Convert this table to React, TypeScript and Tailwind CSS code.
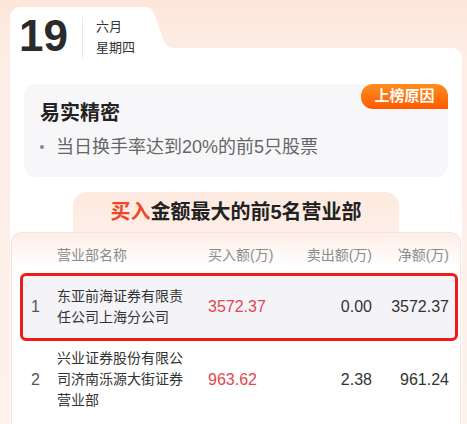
const rows = [
  { no: 1, name: "东亚前海证券有限责任公司上海分公司", buy: "3572.37", sell: "0.00", net: "3572.37", mark: true },
  { no: 2, name: "兴业证券股份有限公司济南泺源大街证券营业部", buy: "963.62", sell: "2.38", net: "961.24", mark: false },
];

const grid = "grid grid-cols-[26px_151px_92px_72px_77px] pl-[8px] pr-[6px]";

function DateTab() {
  return (
    <div className="flex h-[41px]">
      <div className="w-[132px] bg-white rounded-tl-[10px] flex items-start pl-[9px]">
        <div className="mt-[7px] text-[44px] leading-[44px] font-bold text-[#2b2b2b]">19</div>
        <div className="mt-[10px] ml-[14px] w-px h-[41px] bg-[#f5e4dc]" />
        <div className="mt-[9px] ml-[13px] text-[13px] leading-[21px] text-[#333]">
          <div>六月</div>
          <div>星期四</div>
        </div>
      </div>
      <svg width="34" height="41" viewBox="0 0 34 41" className="block">
        <path d="M0 0 H2 C9 0 11 3 14 11 L21 32 C23 38 26 41 34 41 H0 Z" fill="#ffffff" />
      </svg>
    </div>
  );
}

function ReasonCard() {
  return (
    <div className="relative bg-[#f7f7f9] rounded-[12px] pl-[16px] pt-[15px] pb-[16px]">
      <div className="absolute top-0 right-0 w-[87px] h-[25px] rounded-tl-[12px] rounded-bl-[12px] rounded-tr-[12px] bg-gradient-to-b from-[#ff8d1c] to-[#ff5800] flex items-center justify-center text-white text-[15px] font-bold">
        上榜原因
      </div>
      <div className="text-[20px] leading-[28px] font-bold text-[#222]">易实精密</div>
      <div className="mt-[6px] flex items-center text-[18px] leading-[28px] text-[#666]">
        <span className="w-[4px] h-[4px] rounded-full bg-[#8a8a8a] ml-[0px] mr-[12px]" />
        当日换手率达到20%的前5只股票
      </div>
    </div>
  );
}

function TopTable() {
  return (
    <div className="mt-[15px] -mx-[13px]">
      <div className="mx-auto w-[326px] h-[42px] rounded-t-[14px] bg-gradient-to-b from-[#fde9df] to-[#fdefe8] text-center text-[20px] leading-[40px] font-bold text-[#222]">
        <span className="text-[#f0472a]">买入</span>金额最大的前5名营业部
      </div>
      <div className="-mt-[2px] relative border border-[#f8e3da] rounded-t-[10px] bg-[linear-gradient(180deg,#fdeee7_0px,#ffffff_34px)] pl-[8px] pr-[2px] pb-[20px]">
        <div className={`${grid} border-x-[3px] border-transparent h-[40px] pt-[4px] items-center text-[14px] text-[#8c8c8c]`}>
          <div />
          <div>营业部名称</div>
          <div>买入额(万)</div>
          <div className="text-right">卖出额(万)</div>
          <div className="text-right">净额(万)</div>
        </div>
        {rows.map((r) => (
          <div
            key={r.no}
            className={`${grid} items-center border-[3px] ${
              r.mark
                ? "border-[#ef1b1b] rounded-[6px] bg-[#f4f4f8] pt-[10px] pb-[10px]"
                : "border-transparent pt-[4px] pb-[10px]"
            }`}
          >
            <div className="text-[16px] text-[#555]">{r.no}</div>
            <div className="w-[130px] text-[14px] leading-[21px] text-[#333]">{r.name}</div>
            <div className="text-[16px] text-[#e3474d]">{r.buy}</div>
            <div className="text-right text-[16px] text-[#333]">{r.sell}</div>
            <div className="text-right text-[16px] text-[#333]">{r.net}</div>
          </div>
        ))}
      </div>
    </div>
  );
}

export default function App() {
  return (
    <div className="w-[467px] h-[424px] overflow-hidden font-['Liberation_Sans','Noto_Sans_CJK_SC',sans-serif] bg-[linear-gradient(180deg,#fde6da_0px,#fdeee6_60px,#fdf2ec_100%)]">
      <div className="pl-[10px] pr-[5px] pt-[7px]">
        <DateTab />
        <div className="bg-white rounded-tr-[10px] px-[14px] pt-[36px] pb-[40px]">
          <ReasonCard />
          <TopTable />
        </div>
      </div>
    </div>
  );
}
